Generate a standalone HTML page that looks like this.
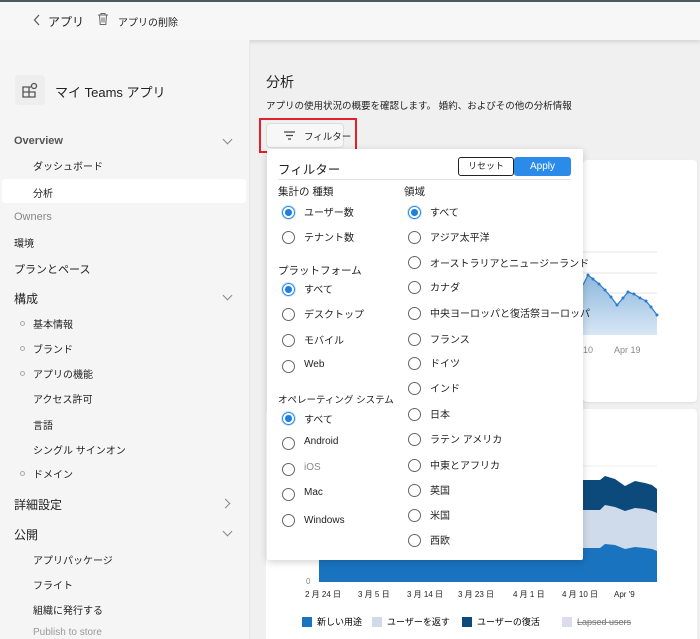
<!DOCTYPE html>
<html><head><meta charset="utf-8"><style>
*{margin:0;padding:0;box-sizing:border-box}
html,body{width:700px;height:639px;overflow:hidden}
body{background:#f0f0f0;font-family:"Liberation Sans","Noto Sans CJK JP",sans-serif;color:#222;position:relative}
.a{position:absolute;white-space:nowrap}
.top{left:0;top:0;width:700px;height:40px;background:#f7f7f7;box-shadow:0 2px 4px rgba(0,0,0,.12);border-top:2px solid #4a5a60}
.side{left:0;top:40px;width:250px;height:599px;background:#f5f5f5;border-right:1px solid #e8e8e8}
.s{font-size:11px}
.sm{font-size:10px}
.rb{position:absolute;width:13px;height:13px;border:1.3px solid #666;border-radius:50%;background:#fff}
.rb.on{border:1.5px solid #2b8ae6;box-shadow:0 0 0 1px #cfe4fa}
.rb.on:after{content:"";position:absolute;left:2px;top:2px;width:6.5px;height:6.5px;border-radius:50%;background:#1e7fe0}
.lb{position:absolute;font-size:10px;color:#222}
.hd{position:absolute;font-size:10.5px;color:#222}
.chev{position:absolute;width:7px;height:7px;border-right:1.2px solid #888;border-bottom:1.2px solid #888}
.dot{position:absolute;width:5px;height:5px;border:1px solid #aaa;border-radius:50%}
</style></head><body>
<div class="a top"></div>
<svg class="a" style="left:33px;top:14px" width="8" height="12" viewBox="0 0 8 12"><path d="M6 1L1.5 6 6 11" stroke="#555" fill="none" stroke-width="1.2"/></svg>
<div class="a s" style="left:48px;top:13px;font-size:12px">アプリ</div>
<svg class="a" style="left:97px;top:12px" width="12" height="14" viewBox="0 0 12 14"><path d="M1 3h10M4 3V1.5h4V3M2.5 3l.7 9.5h5.6L9.5 3M5 5.5v5M7 5.5v5" stroke="#666" fill="none" stroke-width="1"/></svg>
<div class="a sm" style="left:118px;top:14px">アプリの削除</div>
<div class="a side"></div>
<div class="a" style="left:15px;top:75px;width:30px;height:30px;background:#eeeeee;border-radius:4px"></div>
<svg class="a" style="left:21px;top:81px" width="18" height="18" viewBox="0 0 18 18"><path d="M2 6h6v10H2zM2 11h12v5H8M8 6h2M13 2.5a2.5 2.5 0 1 1 0 5 2.5 2.5 0 0 1 0-5z" stroke="#555" fill="none" stroke-width="1.3"/></svg>
<div class="a" style="left:55px;top:82px;font-size:13px">マイ Teams アプリ</div>
<div class="a s" style="left:14px;top:135px;color:#555;font-weight:bold">Overview</div>
<div class="chev" style="left:224px;top:136px;transform:rotate(45deg)"></div>
<div class="a sm" style="left:33px;top:158px">ダッシュボード</div>
<div class="a" style="left:2px;top:179px;width:244px;height:24px;background:#fff;border-radius:3px"></div>
<div class="a sm" style="left:33px;top:185px">分析</div>
<div class="a s" style="left:14px;top:211px;color:#888">Owners</div>
<div class="a sm" style="left:14px;top:235px">環境</div>
<div class="a s" style="left:14px;top:261px">プランとペース</div>
<div class="a s" style="left:14px;top:290px;font-size:12px">構成</div>
<div class="chev" style="left:224px;top:292px;transform:rotate(45deg)"></div>
<div class="dot" style="left:20px;top:321px"></div><div class="a sm" style="left:33px;top:316px">基本情報</div>
<div class="dot" style="left:20px;top:346px"></div><div class="a sm" style="left:33px;top:341px">ブランド</div>
<div class="dot" style="left:20px;top:371px"></div><div class="a sm" style="left:33px;top:366px">アプリの機能</div>
<div class="a sm" style="left:33px;top:391px">アクセス許可</div>
<div class="a sm" style="left:33px;top:417px">言語</div>
<div class="a sm" style="left:33px;top:442px">シングル サインオン</div>
<div class="dot" style="left:20px;top:471px"></div><div class="a sm" style="left:33px;top:466px">ドメイン</div>
<div class="a s" style="left:14px;top:496px;font-size:12px">詳細設定</div>
<div class="chev" style="left:222px;top:500px;transform:rotate(-45deg)"></div>
<div class="a s" style="left:14px;top:526px;font-size:12px">公開</div>
<div class="chev" style="left:224px;top:528px;transform:rotate(45deg)"></div>
<div class="a sm" style="left:33px;top:552px">アプリパッケージ</div>
<div class="a sm" style="left:33px;top:577px">フライト</div>
<div class="a sm" style="left:33px;top:602px">組織に発行する</div>
<div class="a sm" style="left:33px;top:627px;color:#999">Publish to store</div>

<div class="a" style="left:266px;top:72px;font-size:14px">分析</div>
<div class="a sm" style="left:266px;top:98px;font-size:9.5px">アプリの使用状況の概要を確認します。 婚約、およびその他の分析情報</div>
<div class="a" style="left:259px;top:118px;width:98px;height:35px;border:2px solid #e0202a"></div>
<div class="a" style="left:266px;top:123px;width:78px;height:25px;background:#f7f7f7;border:1px solid #ddd;border-radius:4px"></div>
<svg class="a" style="left:284px;top:131px" width="11" height="9" viewBox="0 0 11 9"><path d="M0 1h11M2 4.5h7M4 8h3" stroke="#444" stroke-width="1.2"/></svg>
<div class="a sm" style="left:304px;top:129px;font-size:9.5px">フィルター</div>

<!-- right card -->
<div class="a" style="left:583px;top:160px;width:114px;height:242px;background:#fff;border-radius:4px;box-shadow:0 1px 2px rgba(0,0,0,.08)"></div>
<svg class="a" style="left:583px;top:160px" width="114" height="200" viewBox="583 160 114 200">
<path d="M583 252H657M583 273H657M583 293H657M583 314H657" stroke="#e6e6e6"/>
<defs><linearGradient id="g" x1="0" y1="0" x2="0" y2="1"><stop offset="0" stop-color="#8db8de"/><stop offset="1" stop-color="#d8e7f5"/></linearGradient></defs>
<path d="M583 285L588 275 593 279 599 284 605 290 611 297 617 305 623 298 628 292 634 294 640 298 646 301 651 307 657 315V335H583Z" fill="url(#g)"/>
<path d="M583 285L588 275 593 279 599 284 605 290 611 297 617 305 623 298 628 292 634 294 640 298 646 301 651 307 657 315" stroke="#2a7ccc" fill="none" stroke-width="1.2"/>
<g fill="#2a7ccc"><circle cx="588" cy="275" r="1.5"/><circle cx="593" cy="279" r="1.5"/><circle cx="599" cy="284" r="1.5"/><circle cx="605" cy="290" r="1.5"/><circle cx="611" cy="297" r="1.5"/><circle cx="617" cy="305" r="1.5"/><circle cx="623" cy="298" r="1.5"/><circle cx="628" cy="292" r="1.5"/><circle cx="634" cy="294" r="1.5"/><circle cx="640" cy="298" r="1.5"/><circle cx="646" cy="301" r="1.5"/><circle cx="651" cy="307" r="1.5"/><circle cx="657" cy="315" r="1.5"/></g>
<text x="583" y="353" font-size="9" fill="#888" font-family="Liberation Sans">10</text>
<text x="614" y="353" font-size="9" fill="#888" font-family="Liberation Sans">Apr 19</text>
</svg>

<!-- bottom card -->
<div class="a" style="left:266px;top:409px;width:431px;height:240px;background:#fff;border-radius:4px"></div>
<svg class="a" style="left:266px;top:409px" width="431" height="230" viewBox="266 409 431 230">
<path d="M319 466H657" stroke="#eee"/>
<path d="M319 480L600 480 605 476 615 479 625 486 635 481 645 483 652 485 657 489V582H319Z" fill="#0d4a7c"/>
<path d="M319 510L600 510 605 505 615 507 625 511 635 508 645 509 652 511 657 513V582H319Z" fill="#cfdbea"/>
<path d="M319 548L600 548 605 544 615 545 625 549 635 547 645 548 652 549 657 551V582H319Z" fill="#1a73bf"/>
<text x="306" y="584" font-size="8" fill="#888" font-family="Liberation Sans">0</text>
<g font-size="8" fill="#222" font-family="Liberation Sans,Noto Sans CJK JP">
<text x="305" y="597">2 月 24 日</text><text x="358" y="597">3 月 5 日</text><text x="407" y="597">3 月 14 日</text><text x="458" y="597">3 月 23 日</text><text x="513" y="597">4 月 1 日</text><text x="562" y="597">4 月 10 日</text><text x="614" y="597">Apr '9</text></g>
<rect x="302" y="617" width="10" height="10" fill="#1a73bf"/><text x="317" y="625" font-size="9" font-family="Noto Sans CJK JP">新しい用途</text>
<rect x="372" y="617" width="10" height="10" fill="#cfdbea"/><text x="387" y="625" font-size="9" font-family="Noto Sans CJK JP">ユーザーを返す</text>
<rect x="462" y="617" width="10" height="10" fill="#0d4a7c"/><text x="477" y="625" font-size="9" font-family="Noto Sans CJK JP">ユーザーの復活</text>
<rect x="562" y="617" width="10" height="10" fill="#dcdcf0"/><text x="577" y="625" font-size="9" fill="#777" text-decoration="line-through" font-family="Liberation Sans">Lapsed users</text>
</svg>

<!-- popup -->
<div class="a" style="left:267px;top:149px;width:316px;height:411px;background:#fff;box-shadow:0 2px 8px rgba(0,0,0,.18);border-radius:2px"></div>
<div class="a" style="left:278px;top:159px;font-size:12.5px">フィルター</div>
<div class="a" style="left:458px;top:157px;width:56px;height:19px;border:1.5px solid #222;border-radius:3px;font-size:9px;text-align:center;line-height:16px">リセット</div>
<div class="a" style="left:514px;top:157px;width:57px;height:19px;background:#2a8ce8;border-radius:3px;font-size:10px;color:#fff;text-align:center;line-height:19px">Apply</div>
<div class="a" style="left:278px;top:179px;width:293px;height:1px;background:#e4e4e4"></div>

<div class="hd" style="left:278px;top:184px">集計の 種類</div>
<div class="rb on" style="left:282px;top:206px"></div><div class="lb" style="left:304px;top:204px">ユーザー数</div>
<div class="rb" style="left:282px;top:231px"></div><div class="lb" style="left:304px;top:229px">テナント数</div>
<div class="hd" style="left:278px;top:263px">プラットフォーム</div>
<div class="rb on" style="left:282px;top:283px"></div><div class="lb" style="left:304px;top:281px">すべて</div>
<div class="rb" style="left:282px;top:308px"></div><div class="lb" style="left:304px;top:306px">デスクトップ</div>
<div class="rb" style="left:282px;top:334px"></div><div class="lb" style="left:304px;top:332px">モバイル</div>
<div class="rb" style="left:282px;top:360px"></div><div class="lb" style="left:304px;top:359px">Web</div>
<div class="hd" style="left:278px;top:392px;font-size:9.5px">オペレーティング システム</div>
<div class="rb on" style="left:282px;top:412px"></div><div class="lb" style="left:304px;top:411px">すべて</div>
<div class="rb" style="left:282px;top:437px"></div><div class="lb" style="left:304px;top:436px">Android</div>
<div class="rb" style="left:282px;top:463px"></div><div class="lb" style="left:304px;top:462px;color:#888">iOS</div>
<div class="rb" style="left:282px;top:488px"></div><div class="lb" style="left:304px;top:487px">Mac</div>
<div class="rb" style="left:282px;top:514px"></div><div class="lb" style="left:304px;top:515px">Windows</div>

<div class="hd" style="left:404px;top:184px">領域</div>
<div class="rb on" style="left:408px;top:206px"></div><div class="lb" style="left:430px;top:204px">すべて</div>
<div class="rb" style="left:408px;top:231px"></div><div class="lb" style="left:430px;top:229px">アジア太平洋</div>
<div class="rb" style="left:408px;top:256px"></div><div class="lb" style="left:430px;top:255px">オーストラリアとニュージーランド</div>
<div class="rb" style="left:408px;top:281px"></div><div class="lb" style="left:430px;top:279px">カナダ</div>
<div class="rb" style="left:408px;top:307px"></div><div class="lb" style="left:430px;top:305px">中央ヨーロッパと復活祭ヨーロッパ</div>
<div class="rb" style="left:408px;top:333px"></div><div class="lb" style="left:430px;top:331px">フランス</div>
<div class="rb" style="left:408px;top:357px"></div><div class="lb" style="left:430px;top:355px">ドイツ</div>
<div class="rb" style="left:408px;top:382px"></div><div class="lb" style="left:430px;top:380px">インド</div>
<div class="rb" style="left:408px;top:408px"></div><div class="lb" style="left:430px;top:406px">日本</div>
<div class="rb" style="left:408px;top:433px"></div><div class="lb" style="left:430px;top:431px">ラテン アメリカ</div>
<div class="rb" style="left:408px;top:459px"></div><div class="lb" style="left:430px;top:457px">中東とアフリカ</div>
<div class="rb" style="left:408px;top:484px"></div><div class="lb" style="left:430px;top:482px">英国</div>
<div class="rb" style="left:408px;top:509px"></div><div class="lb" style="left:430px;top:507px">米国</div>
<div class="rb" style="left:408px;top:534px"></div><div class="lb" style="left:430px;top:532px">西欧</div>
</body></html>
